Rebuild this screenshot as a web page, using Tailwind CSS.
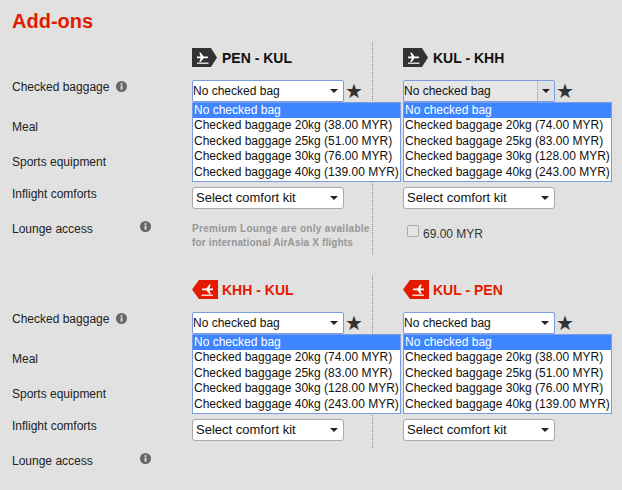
<!DOCTYPE html>
<html lang="en">
<head>
    <meta charset="UTF-8">
    <title>Add-ons</title>
    <script src="https://cdn.jsdelivr.net/npm/@tailwindcss/browser@4"></script>
</head>
<body class="bg-[#e1e1e1] font-['Liberation_Sans',Arial,sans-serif] w-[622px] h-[490px] overflow-hidden">
    <h1 class="pl-3 pt-[8px] h-[42px] text-[20px] leading-[26px] font-bold text-[#e31a00]">Add-ons</h1>

    <!-- depart -->
    <section class="flex h-[213px]">
        <div class="w-[192px] shrink-0 pl-3 pt-[36px] text-[12px] text-[#222]">
            <div class="h-[40px] flex items-start">Checked baggage <svg class="ml-[7px] mt-[3px]" width="11" height="11" viewBox="0 0 12 12"><circle cx="6" cy="6" r="6" fill="#666"/><rect x="5" y="5" width="2" height="4.5" fill="#e1e1e1"/><rect x="5" y="2.4" width="2" height="1.8" fill="#e1e1e1"/></svg></div>
            <div class="h-[35px]">Meal</div>
            <div class="h-[32px]">Sports equipment</div>
            <div class="h-[35px]">Inflight comforts</div>
            <div class="flex items-start w-[139px]"><span>Lounge access</span><svg class="ml-auto mt-[1px]" width="11" height="11" viewBox="0 0 12 12"><circle cx="6" cy="6" r="6" fill="#666"/><rect x="5" y="5" width="2" height="4.5" fill="#e1e1e1"/><rect x="5" y="2.4" width="2" height="1.8" fill="#e1e1e1"/></svg></div>
        </div>

        <div class="relative w-[181px] shrink-0 border-r border-dotted border-r-[#8a8a8a]">
            <div class="flex items-start gap-[5px] h-[38px] pt-[6px] text-[14px] leading-[21px] font-bold text-[#111]">
                <svg width="25" height="19" viewBox="0 0 25 19"><path d="M0 0H19L25 9.5L19 19H0Z" fill="#333"/><path d="M5 8.6H8.6L7.3 4.6H8.6L11.6 8.6H15.4C16.4 8.6 16.4 10.2 15.4 10.2H11.6L8.6 14H7.3L8.6 10.2H5L5 8.6Z" fill="#fff"/><rect x="5" y="14.6" width="11.5" height="1.2" fill="#fff"/></svg>
                PEN - KUL
            </div>
            <div class="flex items-center h-[22px] gap-[1px]">
                <div class="w-[152px] h-[22px] bg-white border border-[#7c9ce0] rounded-[2px] flex items-center justify-between pr-[5px] text-[12px] text-[#111]">No checked bag<svg width="8" height="4" viewBox="0 0 8 4"><path d="M0 0H8L4 4Z" fill="#222"/></svg></div>
                <span class="text-[#333] text-[20px] leading-none">★</span>
            </div>
            <div class="absolute left-0 top-[60px] z-10 w-[209px] h-[80px] bg-white border border-[#7c9ce0] text-[12px] leading-[15.5px] text-[#111] whitespace-nowrap">
                <div class="bg-[#3e86ff] text-white pl-[1px] leading-[15px]">No checked bag</div>
                <div class="pl-[1px]">Checked baggage 20kg (38.00 MYR)</div>
                <div class="pl-[1px]">Checked baggage 25kg (51.00 MYR)</div>
                <div class="pl-[1px]">Checked baggage 30kg (76.00 MYR)</div>
                <div class="pl-[1px]">Checked baggage 40kg (139.00 MYR)</div>
            </div>
            <div class="mt-[85px] w-[152px] h-[22px] bg-white border border-[#a9a9a9] rounded-[3px] flex items-center justify-between pl-[3px] pr-[5px] text-[13px] text-[#111]">Select comfort kit<svg width="8" height="4" viewBox="0 0 8 4"><path d="M0 0H8L4 4Z" fill="#222"/></svg></div>
            <p class="mt-[13px] text-[10px] leading-[14px] tracking-[0.15px] font-bold text-[#969696] whitespace-nowrap"><span class="tracking-[0.3px]">Premium Lounge are only available</span><br>for international AirAsia X flights</p>
        </div>

        <div class="relative pl-[30px] grow">
            <div class="flex items-start gap-[5px] h-[38px] pt-[6px] text-[14px] leading-[21px] font-bold text-[#111]">
                <svg width="25" height="19" viewBox="0 0 25 19"><path d="M0 0H19L25 9.5L19 19H0Z" fill="#333"/><path d="M5 8.6H8.6L7.3 4.6H8.6L11.6 8.6H15.4C16.4 8.6 16.4 10.2 15.4 10.2H11.6L8.6 14H7.3L8.6 10.2H5L5 8.6Z" fill="#fff"/><rect x="5" y="14.6" width="11.5" height="1.2" fill="#fff"/></svg>
                KUL - KHH
            </div>
            <div class="flex items-center h-[22px] gap-[1px]">
                <div class="w-[152px] h-[22px] bg-[#e6e6e6] border border-[#7c9ce0] rounded-[2px] flex items-center justify-between text-[12px] text-[#111]">No checked bag<span class="flex items-center justify-center w-[17px] h-[20px] bg-[#e0e0e0] border-l border-[#bbb]"><svg width="8" height="4" viewBox="0 0 8 4"><path d="M0 0H8L4 4Z" fill="#222"/></svg></span></div>
                <span class="text-[#333] text-[20px] leading-none">★</span>
            </div>
            <div class="absolute left-[30px] top-[60px] z-10 w-[209px] h-[80px] bg-white border border-[#7c9ce0] text-[12px] leading-[15.5px] text-[#111] whitespace-nowrap">
                <div class="bg-[#3e86ff] text-white pl-[1px] leading-[15px]">No checked bag</div>
                <div class="pl-[1px]">Checked baggage 20kg (74.00 MYR)</div>
                <div class="pl-[1px]">Checked baggage 25kg (83.00 MYR)</div>
                <div class="pl-[1px]">Checked baggage 30kg (128.00 MYR)</div>
                <div class="pl-[1px]">Checked baggage 40kg (243.00 MYR)</div>
            </div>
            <div class="mt-[85px] w-[152px] h-[22px] bg-white border border-[#a9a9a9] rounded-[3px] flex items-center justify-between pl-[3px] pr-[5px] text-[13px] text-[#111]">Select comfort kit<svg width="8" height="4" viewBox="0 0 8 4"><path d="M0 0H8L4 4Z" fill="#222"/></svg></div>
            <div class="mt-[16px] ml-[4px] flex items-start gap-[4px] text-[12px] text-[#333]"><span class="w-[12px] h-[12px] border border-[#aaa] bg-[#e4e4e4] rounded-[2px]"></span><span>69.00 MYR</span></div>
        </div>
    </section>

    <div class="h-[20px]"></div>

    <!-- return -->
    <section class="flex h-[173px]">
        <div class="w-[192px] shrink-0 pl-3 pt-[35px] text-[12px] text-[#222]">
            <div class="h-[40px] flex items-start">Checked baggage <svg class="ml-[7px] mt-[3px]" width="11" height="11" viewBox="0 0 12 12"><circle cx="6" cy="6" r="6" fill="#666"/><rect x="5" y="5" width="2" height="4.5" fill="#e1e1e1"/><rect x="5" y="2.4" width="2" height="1.8" fill="#e1e1e1"/></svg></div>
            <div class="h-[35px]">Meal</div>
            <div class="h-[32px]">Sports equipment</div>
            <div class="h-[35px]">Inflight comforts</div>
            <div class="flex items-start w-[139px]"><span>Lounge access</span><svg class="ml-auto mt-[1px]" width="11" height="11" viewBox="0 0 12 12"><circle cx="6" cy="6" r="6" fill="#666"/><rect x="5" y="5" width="2" height="4.5" fill="#e1e1e1"/><rect x="5" y="2.4" width="2" height="1.8" fill="#e1e1e1"/></svg></div>
        </div>

        <div class="relative w-[181px] shrink-0 border-r border-dotted border-r-[#8a8a8a]">
            <div class="flex items-start gap-[4px] h-[37px] pt-[5px] text-[14px] leading-[21px] font-bold text-[#e31a00]">
                <svg width="26" height="19" viewBox="0 0 26 19"><path d="M26 0H7L0 9.5L7 19H26Z" fill="#e31a00"/><path d="M21 8.6H17.4L18.7 4.6H17.4L14.4 8.6H10.6C9.6 8.6 9.6 10.2 10.6 10.2H14.4L17.4 14H18.7L17.4 10.2H21Z" fill="#fff"/><rect x="9.5" y="14.6" width="11.5" height="1.2" fill="#fff"/></svg>
                KHH - KUL
            </div>
            <div class="flex items-center h-[22px] gap-[1px]">
                <div class="w-[152px] h-[22px] bg-white border border-[#7c9ce0] rounded-[2px] flex items-center justify-between pr-[5px] text-[12px] text-[#111]">No checked bag<svg width="8" height="4" viewBox="0 0 8 4"><path d="M0 0H8L4 4Z" fill="#222"/></svg></div>
                <span class="text-[#333] text-[20px] leading-none">★</span>
            </div>
            <div class="absolute left-0 top-[59px] z-10 w-[209px] h-[80px] bg-white border border-[#7c9ce0] text-[12px] leading-[15.5px] text-[#111] whitespace-nowrap">
                <div class="bg-[#3e86ff] text-white pl-[1px] leading-[15px]">No checked bag</div>
                <div class="pl-[1px]">Checked baggage 20kg (74.00 MYR)</div>
                <div class="pl-[1px]">Checked baggage 25kg (83.00 MYR)</div>
                <div class="pl-[1px]">Checked baggage 30kg (128.00 MYR)</div>
                <div class="pl-[1px]">Checked baggage 40kg (243.00 MYR)</div>
            </div>
            <div class="mt-[85px] w-[152px] h-[22px] bg-white border border-[#a9a9a9] rounded-[3px] flex items-center justify-between pl-[3px] pr-[5px] text-[13px] text-[#111]">Select comfort kit<svg width="8" height="4" viewBox="0 0 8 4"><path d="M0 0H8L4 4Z" fill="#222"/></svg></div>
        </div>

        <div class="relative pl-[30px] grow">
            <div class="flex items-start gap-[4px] h-[37px] pt-[5px] text-[14px] leading-[21px] font-bold text-[#e31a00]">
                <svg width="26" height="19" viewBox="0 0 26 19"><path d="M26 0H7L0 9.5L7 19H26Z" fill="#e31a00"/><path d="M21 8.6H17.4L18.7 4.6H17.4L14.4 8.6H10.6C9.6 8.6 9.6 10.2 10.6 10.2H14.4L17.4 14H18.7L17.4 10.2H21Z" fill="#fff"/><rect x="9.5" y="14.6" width="11.5" height="1.2" fill="#fff"/></svg>
                KUL - PEN
            </div>
            <div class="flex items-center h-[22px] gap-[1px]">
                <div class="w-[152px] h-[22px] bg-white border border-[#7c9ce0] rounded-[2px] flex items-center justify-between pr-[5px] text-[12px] text-[#111]">No checked bag<svg width="8" height="4" viewBox="0 0 8 4"><path d="M0 0H8L4 4Z" fill="#222"/></svg></div>
                <span class="text-[#333] text-[20px] leading-none">★</span>
            </div>
            <div class="absolute left-[30px] top-[59px] z-10 w-[209px] h-[80px] bg-white border border-[#7c9ce0] text-[12px] leading-[15.5px] text-[#111] whitespace-nowrap">
                <div class="bg-[#3e86ff] text-white pl-[1px] leading-[15px]">No checked bag</div>
                <div class="pl-[1px]">Checked baggage 20kg (38.00 MYR)</div>
                <div class="pl-[1px]">Checked baggage 25kg (51.00 MYR)</div>
                <div class="pl-[1px]">Checked baggage 30kg (76.00 MYR)</div>
                <div class="pl-[1px]">Checked baggage 40kg (139.00 MYR)</div>
            </div>
            <div class="mt-[85px] w-[152px] h-[22px] bg-white border border-[#a9a9a9] rounded-[3px] flex items-center justify-between pl-[3px] pr-[5px] text-[13px] text-[#111]">Select comfort kit<svg width="8" height="4" viewBox="0 0 8 4"><path d="M0 0H8L4 4Z" fill="#222"/></svg></div>
        </div>
    </section>
</body>
</html>
